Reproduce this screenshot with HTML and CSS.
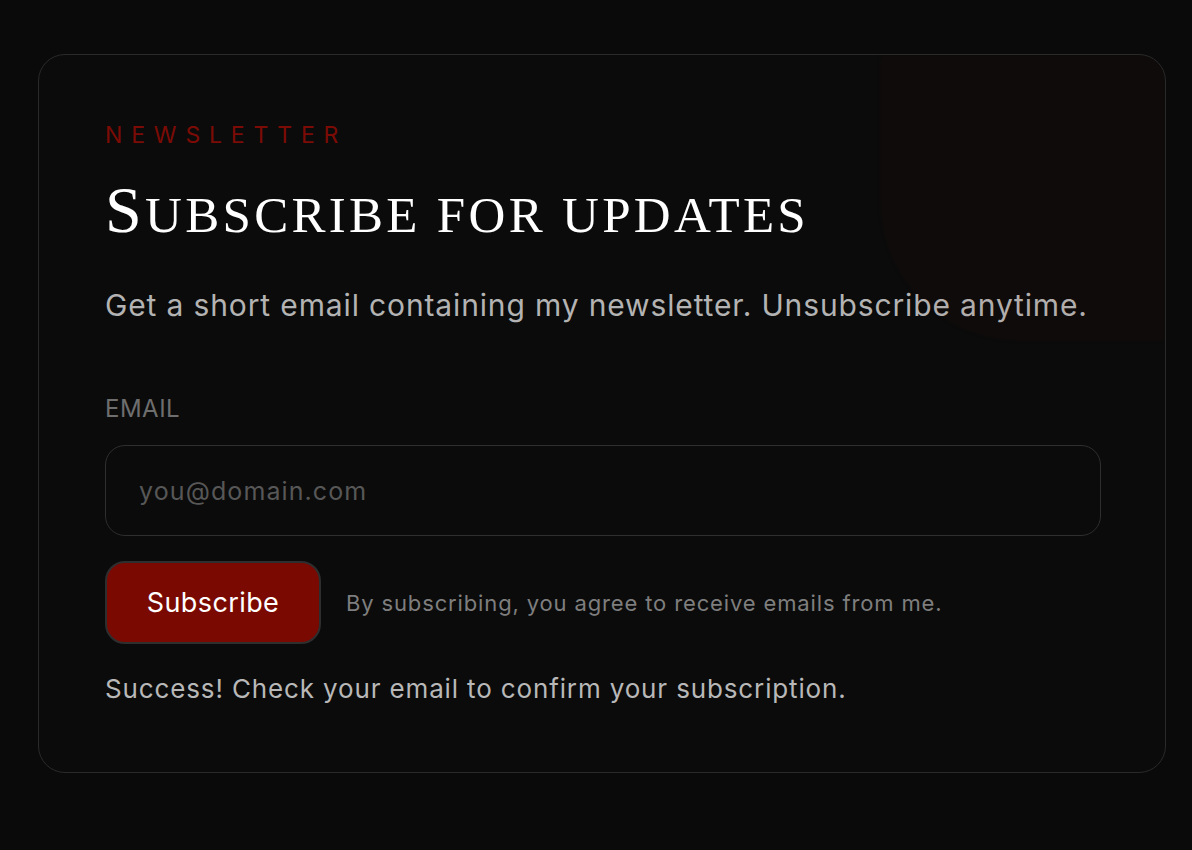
FILE: index.html
```html
<!DOCTYPE html>
<html lang="en">

<head>
    <meta charset="UTF-8">
    <meta name="viewport" content="width=device-width, initial-scale=1.0">
    <title>Newsletter</title>
    <link rel="stylesheet" href="styles.css">
</head>

<body>
    <section class="card">
        <div class="glow"></div>
        <p class="eyebrow">Newsletter</p>
        <h2 class="title">Subscribe for updates</h2>
        <p class="lead">Get a short email containing my newsletter. Unsubscribe anytime.</p>

        <form class="form" onsubmit="return false;">
            <label class="label" for="email">Email</label>
            <input class="input" id="email" type="email" placeholder="you@domain.com">
            <div class="actions">
                <button class="btn" type="submit">Subscribe</button>
                <span class="note">By subscribing, you agree to receive emails from me.</span>
            </div>
        </form>

        <p class="status">Success! Check your email to confirm your subscription.</p>
    </section>
</body>

</html>
```

FILE: styles.css
```css
* {
    box-sizing: border-box;
}

body {
    margin: 0;
    background: #0a0a0a;
    font-family: Inter, "Noto Sans", sans-serif;
    letter-spacing: 0.86px;
    color: #b5b5b5;
}

.card {
    position: relative;
    overflow: hidden;
    width: 1128px;
    margin: 54px 0 0 38px;
    padding: 64px 66px 66px 66px;
    background: #0b0b0b;
    border: 1.5px solid #2a2a2a;
    border-radius: 27px;
}

/* faint red glow in the corner */
.glow {
    position: absolute;
    top: 0;
    right: 0;
    width: 285px;
    height: 286px;
    border-bottom-left-radius: 140px;
    background: rgba(128, 20, 10, 0.035);
    filter: blur(2px);
}

.eyebrow {
    margin: 0;
    font-size: 23px;
    line-height: 32px;
    letter-spacing: 0.385em;
    text-transform: uppercase;
    color: #7c0b06;
}

.title {
    margin: 24px 0 0;
    font-family: "Liberation Serif", serif;
    text-transform: uppercase;
    font-weight: 400;
    font-size: 51px;
    line-height: 70px;
    letter-spacing: 3.3px;
    color: #fff;
}

.title::first-letter {
    font-size: 66px;
}

.lead {
    margin: 35px 0 0;
    font-size: 30px;
    line-height: 40px;
    color: #b3b3b3;
}

.form {
    margin-top: 68px;
}

.label {
    display: block;
    font-size: 24px;
    line-height: 32px;
    letter-spacing: 0.5px;
    text-transform: uppercase;
    color: #6e6e6e;
}

.input {
    display: block;
    width: 996px;
    height: 91px;
    margin-top: 20px;
    padding: 0 33px;
    background: #0b0b0b;
    border: 1.5px solid #2f2f2f;
    border-radius: 20px;
    font-family: inherit;
    font-size: 25px;
    letter-spacing: 1.1px;
    color: #ddd;
    outline: none;
}

.input::placeholder {
    color: #575757;
}

.actions {
    display: flex;
    align-items: center;
    gap: 25px;
    margin-top: 25px;
}

.btn {
    width: 216px;
    height: 83px;
    background: #7a0902;
    border: 2px solid #2e2e2e;
    border-radius: 20px;
    font-family: inherit;
    font-size: 27px;
    letter-spacing: 0.4px;
    color: #fff;
    cursor: pointer;
}

.note {
    font-size: 22px;
    color: #7e7e7e;
}

.status {
    margin: 28px 0 0;
    font-size: 26px;
    line-height: 34px;
    color: #b8b8b8;
}
```
